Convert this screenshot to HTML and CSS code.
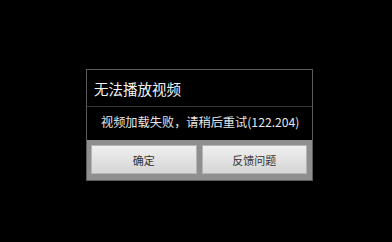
FILE: index.html
```html
<!DOCTYPE html>
<html lang="zh-CN">
<head>
    <meta charset="UTF-8">
    <title>无法播放视频</title>
    <link rel="stylesheet" href="styles.css">
</head>
<body>
    <div id="screen">
        <!-- Error dialog -->
        <div class="dialog">
            <div class="dialog-title">无法播放视频</div>
            <div class="dialog-message">视频加载失败<span class="comma">，</span>请稍后重试(122.204)</div>
            <div class="dialog-buttons">
                <div class="btn">确定</div>
                <div class="btn">反馈问题</div>
            </div>
        </div>
    </div>
</body>
</html>
```

FILE: styles.css
```css
/* Global Styles */
body {
    margin: 0;
    background-color: #000000;
    font-family: "Noto Sans CJK SC", "Noto Sans", sans-serif;
}

#screen {
    width: 392px;
    height: 242px;
    padding: 69px 0 0 86px;
    box-sizing: border-box;
}

/* Dialog */
.dialog {
    width: 227px;
    border: 1px solid #5a5a5a;
    background-color: #000000;
    box-sizing: border-box;
}

.dialog-title {
    height: 36px;
    line-height: 38px;
    padding-left: 7px;
    font-size: 14.5px;
    color: #f2f2f2;
    border-bottom: 1px solid #333333;
}

.dialog-message {
    height: 33px;
    line-height: 31px;
    padding-left: 14px;
    font-size: 12.2px;
    color: #e6e6e6;
    white-space: nowrap;
}

/* centred fullwidth comma, as on the device */
.dialog-message .comma {
    font-family: "Noto Sans CJK TC", sans-serif;
}

.dialog-buttons {
    display: flex;
    gap: 5px;
    padding: 5px 5px 6px 4px;
    background-color: #8f8f8f;
}

.btn {
    flex: 1;
    height: 29px;
    line-height: 29px;
    box-sizing: border-box;
    text-align: center;
    font-size: 11px;
    color: #333333;
    background: linear-gradient(#efefef, #d6d6d6);
    border: 1px solid #b4b4b4;
}
```
